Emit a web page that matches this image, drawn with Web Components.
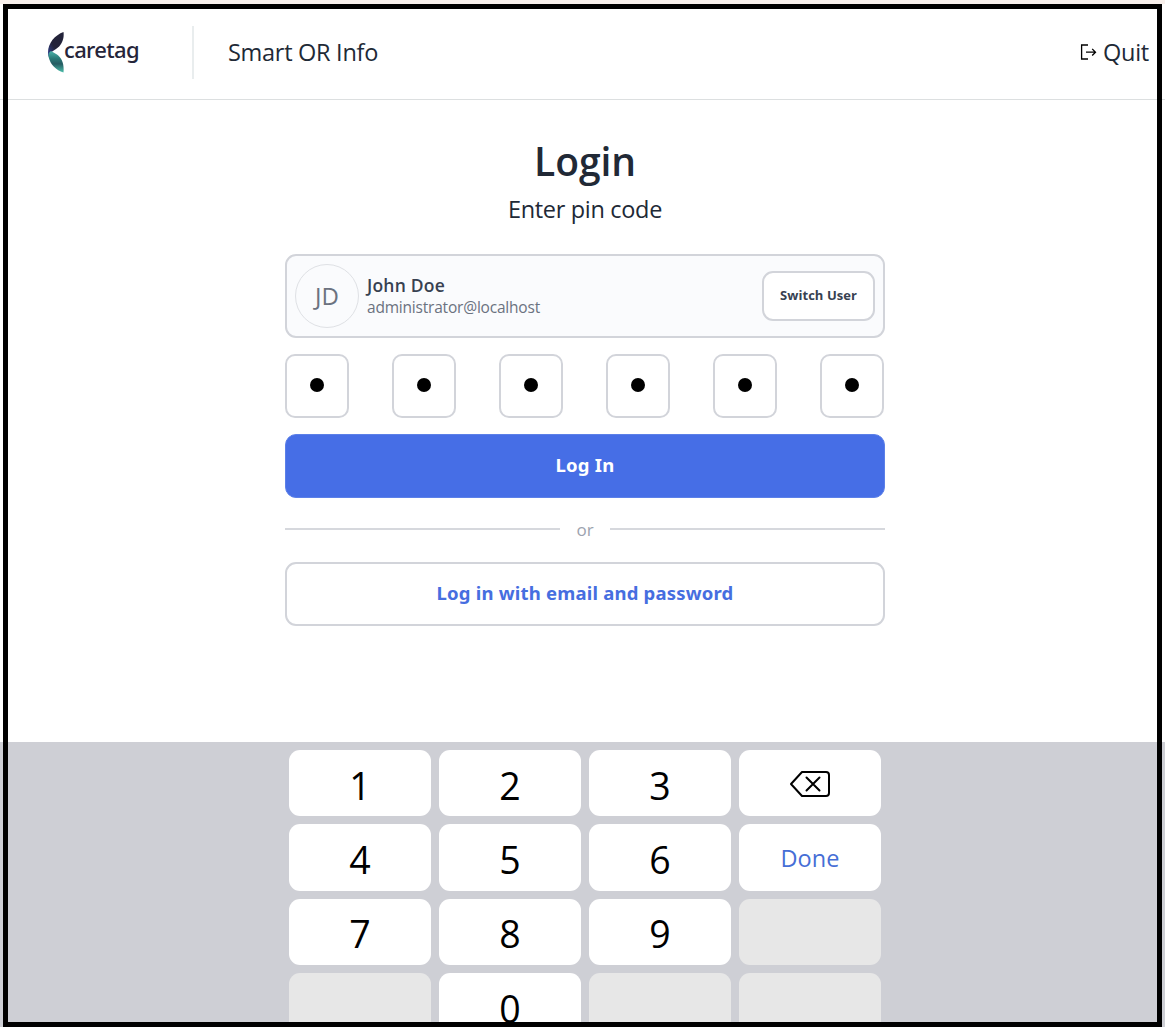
<!DOCTYPE html>
<html lang="en">
  <head>
    <meta charset="UTF-8" />
    <meta name="viewport" content="width=device-width, initial-scale=1.0" />
    <title>Smart OR Info</title>
    <style>
      body {
        margin: 0;
        background: #fff;
        font-family: "Segoe UI", "Open Sans", "Noto Sans", sans-serif;
        color: #212936;
      }
    </style>
  </head>
  <body>
    <login-screen></login-screen>

    <template id="login-screen">
      <style>
        :host {
          display: flex;
          flex-direction: column;
          position: relative;
          height: 1027px;
          box-sizing: border-box;
          border-top: 4px solid #f8f0ec;
          overflow: hidden;
        }
        main {
          width: 600px;
          height: 642px;
          flex: none;
          box-sizing: border-box;
          margin: 0 auto;
          padding: 33px 0 0;
          position: relative;
          left: 2.5px;
          display: flex;
          flex-direction: column;
          align-items: stretch;
        }
        h1 {
          margin: 0;
          font-size: 39px;
          line-height: 55px;
          font-weight: 600;
          text-align: center;
        }
        .hint {
          margin-bottom: 23px;
          font-size: 23.5px;
          line-height: 43px;
          text-align: center;
        }
        .stack {
          display: grid;
          gap: 16px;
        }
        .pins {
          display: flex;
          justify-content: space-between;
          padding-right: 1px;
        }
        /* outline drawn over the whole screen */
        .frame {
          position: absolute;
          inset: 0 3px 0 3px;
          border: 5px solid #000;
          pointer-events: none;
        }
      </style>
      <app-header>
        <fit-text width="150">Smart OR Info</fit-text>
        <fit-text slot="action" width="46">Quit</fit-text>
      </app-header>
      <main>
        <h1><fit-text width="102">Login</fit-text></h1>
        <div class="hint"><fit-text width="154">Enter pin code</fit-text></div>
        <div class="stack">
          <user-card initials="JD">
            <fit-text slot="name" width="78">John Doe</fit-text>
            <fit-text slot="email" width="173">administrator@localhost</fit-text>
            <fit-text slot="switch" width="77">Switch User</fit-text>
          </user-card>
          <div class="pins">
            <pin-box></pin-box><pin-box></pin-box><pin-box></pin-box>
            <pin-box></pin-box><pin-box></pin-box><pin-box></pin-box>
          </div>
          <big-button primary><fit-text width="59">Log In</fit-text></big-button>
          <or-line>or</or-line>
          <big-button><fit-text width="297">Log in with email and password</fit-text></big-button>
        </div>
      </main>
      <num-pad></num-pad>
      <div class="frame"></div>
    </template>

    <template id="app-header">
      <style>
        :host {
          display: flex;
          align-items: center;
          flex: none;
          height: 96px;
          box-sizing: border-box;
          border-bottom: 1px solid #dcdfe0;
          padding: 0 16px 0 47px;
          font-size: 23.5px;
          line-height: 32px;
        }
        .divider {
          width: 2px;
          height: 53px;
          margin: 2px 34px 0 53px;
          background: #e9edee;
        }
        .action {
          display: flex;
          align-items: center;
          gap: 6px;
          margin-left: auto;
        }
        svg {
          display: block;
        }
      </style>
      <brand-logo></brand-logo>
      <div class="divider"></div>
      <slot></slot>
      <div class="action">
        <svg width="17" height="16" viewBox="0 0 17 16" fill="none" stroke="#000" stroke-width="1.3">
          <path d="M8 1H1.6v14H8" />
          <path d="M6 8.2h9.4M12.2 4.9l3.3 3.3-3.3 3.3" />
        </svg>
        <slot name="action"></slot>
      </div>
    </template>

    <template id="brand-logo">
      <style>
        :host {
          display: flex;
          width: 92px;
          height: 42px;
          font-family: "Noto Sans", "Open Sans", sans-serif;
          font-size: 22px;
          line-height: 36px;
          font-weight: 500;
          color: #25253a;
        }
        svg {
          flex: none;
        }
      </style>
      <svg width="17" height="42" viewBox="0 0 17 42">
        <defs>
          <linearGradient id="top" x1="1" y1="0" x2="0" y2="1">
            <stop offset="0.6" stop-color="#23233a" />
            <stop offset="1" stop-color="#34469b" />
          </linearGradient>
          <linearGradient id="bottom" x1="0.700" y1="0" x2="0.700" y2="1">
            <stop offset="0" stop-color="#4db5ab" />
            <stop offset="0.35" stop-color="#2b7a78" />
            <stop offset="0.6" stop-color="#265c62" />
            <stop offset="1" stop-color="#4cc0ac" />
          </linearGradient>
        </defs>
        <path d="M16.500 1C8 4 1 12 1 21.500c0 1.500.2 3 .7 4.500C2 23 4.500 20.500 9 18 14.500 14.500 17.500 8 16.500 1z" fill="url(#top)" />
        <path d="M4 20C1.500 21.500 1.200 24 1.600 26 3.500 34 9 39 16.500 41.500c.8-8.500-1.500-14.500-6.500-18C7.500 22 5.500 21 4 20z" fill="url(#bottom)" />
      </svg>
      <fit-text width="75">caretag</fit-text>
    </template>

    <template id="user-card">
      <style>
        :host {
          display: flex;
          align-items: center;
          height: 84px;
          box-sizing: border-box;
          padding: 0 8px;
          border: 2px solid #d2d4da;
          border-radius: 11px;
          background: #fafbfd;
        }
        .avatar {
          width: 64px;
          height: 64px;
          box-sizing: border-box;
          margin-right: 8px;
          padding-bottom: 2px;
          border: 1px solid #dfe1e5;
          border-radius: 50%;
          display: grid;
          place-items: center;
          font-size: 24px;
          color: #6b7280;
        }
        .info {
          flex: 1;
          font-size: 15.5px;
          line-height: 22px;
          color: #6b7280;
        }
        .name {
          font-size: 17.5px;
          line-height: 22px;
          font-weight: 600;
          color: #374151;
        }
        button {
          width: 113px;
          height: 50px;
          padding: 0 0 2px;
          border: 2px solid #d2d4da;
          border-radius: 11px;
          background: #fff;
          font: 700 13px/18px "Segoe UI", "Open Sans", "Noto Sans", sans-serif;
          color: #374151;
        }
      </style>
      <div class="avatar"></div>
      <div class="info">
        <div class="name"><slot name="name"></slot></div>
        <div><slot name="email"></slot></div>
      </div>
      <button><slot name="switch"></slot></button>
    </template>

    <template id="pin-box">
      <style>
        :host {
          display: grid;
          place-items: center;
          width: 64px;
          height: 64px;
          box-sizing: border-box;
          border: 2px solid #d2d4da;
          border-radius: 10px;
          background: #fff;
        }
        span {
          width: 14px;
          height: 14px;
          margin-top: -2px;
          border-radius: 50%;
          background: #000;
        }
      </style>
      <span></span>
    </template>

    <template id="big-button">
      <style>
        button {
          display: block;
          width: 100%;
          height: 64px;
          padding: 0 0 2px;
          border: 2px solid #d2d4da;
          border-radius: 11px;
          background: #fff;
          font: 700 18.5px/26px "Segoe UI", "Noto Sans", "Open Sans", sans-serif;
          color: #466ee0;
        }
        :host {
          display: block;
        }
        :host([primary]) button {
          border: 1px solid #5c80e8;
          background: #466ee6;
          color: #fff;
        }
      </style>
      <button><slot></slot></button>
    </template>

    <template id="or-line">
      <style>
        :host {
          display: flex;
          align-items: center;
          gap: 16px;
          height: 32px;
          font-size: 17px;
          line-height: 30px;
          color: #9ca3af;
        }
        :host::before,
        :host::after {
          content: "";
          flex: 1;
          height: 2px;
          margin-top: -2px;
          background: #d6d8dd;
        }
      </style>
      <slot></slot>
    </template>

    <template id="num-pad">
      <style>
        :host {
          display: grid;
          grid-template-columns: repeat(4, 142px);
          grid-auto-rows: 66.3px;
          gap: 8px;
          justify-content: center;
          flex: none;
          height: 300px;
          box-sizing: border-box;
          padding: 8px 0 0 5px;
          background: #cecfd5;
        }
      </style>
    </template>

    <template id="pad-key">
      <style>
        :host {
          display: grid;
          place-items: center;
          box-sizing: border-box;
          padding-top: 5px;
          border-radius: 11px;
          background: #fff;
          font-size: 37.5px;
          line-height: 50px;
          color: #000;
        }
        :host([kind="done"]) {
          padding-top: 2px;
          font-size: 23.5px;
          line-height: 32px;
          color: #466ed6;
        }
        :host([kind="back"]) {
          padding-top: 2px;
        }
        :host([kind="empty"]) {
          background: #e7e7e7;
        }
      </style>
      <slot></slot>
    </template>

    <script>
      const shadowFrom = (el, id) => {
        const root = el.attachShadow({ mode: "open" })
        root.appendChild(document.querySelector("#" + id).content.cloneNode(true))
        return root
      }

      // spaces its letters so that the line takes the given width
      customElements.define(
        "fit-text",
        class extends HTMLElement {
          constructor() {
            super()
            this.attachShadow({ mode: "open" }).innerHTML = `
              <style>
                :host { display: inline-block; white-space: nowrap; }
              </style>
              <slot></slot>`
          }

          fit() {
            this.style.letterSpacing = "0"
            const natural = this.getBoundingClientRect().width
            const wanted = Number(this.getAttribute("width"))
            this.style.letterSpacing = (wanted - natural) / this.textContent.length + "px"
          }

          connectedCallback() {
            requestAnimationFrame(() => this.fit())
          }
        }
      )

      for (const name of ["app-header", "brand-logo", "pin-box", "big-button", "or-line", "pad-key"]) {
        customElements.define(
          name,
          class extends HTMLElement {
            constructor() {
              super()
              shadowFrom(this, name)
            }
          }
        )
      }

      customElements.define(
        "user-card",
        class extends HTMLElement {
          constructor() {
            super()
            const root = shadowFrom(this, "user-card")
            root.querySelector(".avatar").textContent = this.getAttribute("initials")
          }
        }
      )

      const backspace = `
        <svg width="42" height="28" viewBox="0 0 42 28" fill="none" stroke="#000" stroke-width="2" stroke-linejoin="round" stroke-linecap="round" style="display: block">
          <path d="M13 2H37a3 3 0 0 1 3 3v18a3 3 0 0 1-3 3H13L2 14z" />
          <path d="M17.500 7.500l13 13M30.500 7.500l-13 13" />
        </svg>`

      customElements.define(
        "num-pad",
        class extends HTMLElement {
          constructor() {
            super()
            const root = shadowFrom(this, "num-pad")
            const keys = ["1", "2", "3", "back", "4", "5", "6", "Done", "7", "8", "9", "", "", "0", "", ""]
            keys.forEach((key) => {
              const el = document.createElement("pad-key")
              if (key === "back") {
                el.setAttribute("kind", "back")
                el.innerHTML = backspace
              } else if (key === "Done") {
                el.setAttribute("kind", "done")
                el.innerHTML = `<fit-text width="59">Done</fit-text>`
              } else if (key === "") {
                el.setAttribute("kind", "empty")
              } else {
                el.textContent = key
              }
              root.appendChild(el)
            })
          }
        }
      )

      customElements.define(
        "login-screen",
        class extends HTMLElement {
          constructor() {
            super()
            shadowFrom(this, "login-screen")
          }
        }
      )
    </script>
  </body>
</html>
